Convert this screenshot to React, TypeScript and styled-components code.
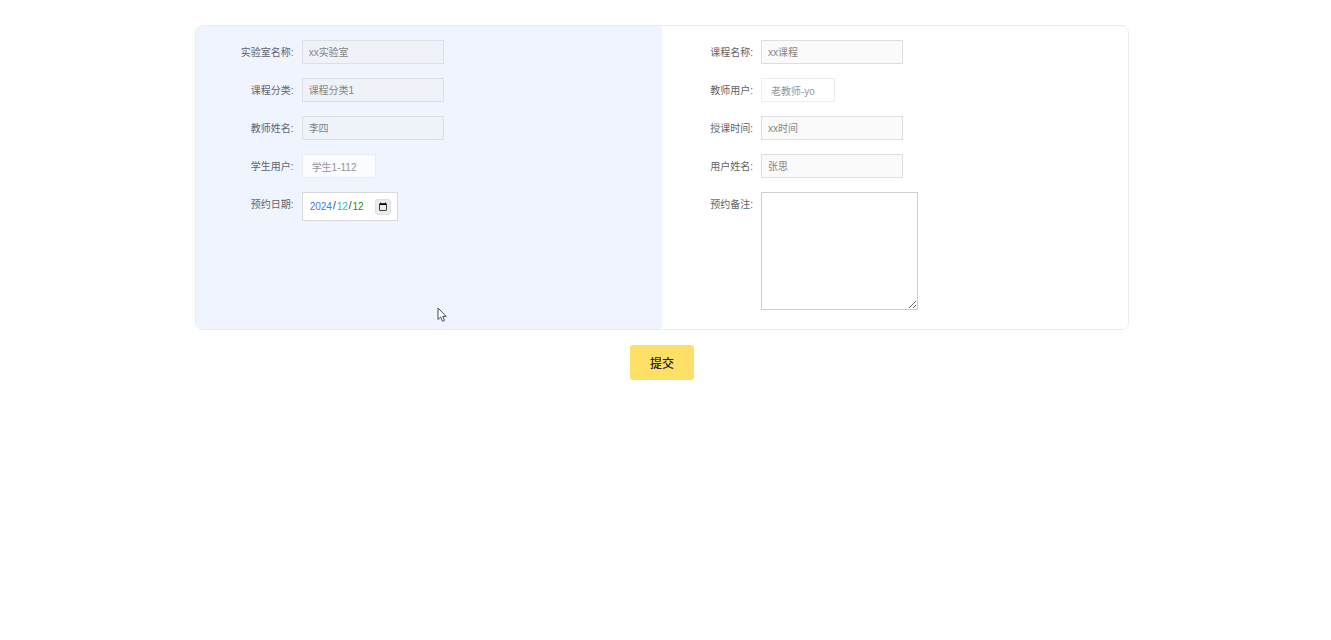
import React from "react";
import styled, { createGlobalStyle } from "styled-components";

const GlobalStyle = createGlobalStyle`
  * { box-sizing: border-box; }
  body {
    margin: 0;
    background: #fff;
    color: #5f636b;
    font-family: "Liberation Sans", "Noto Sans CJK SC", sans-serif;
    font-size: 10px;
  }
`;

const Page = styled.form`
  display: flex;
  flex-direction: column;
  align-items: center;
  gap: 15px;
  padding: 25px 7px 40px 0;
`;

const Card = styled.section`
  position: relative;
  display: grid;
  grid-template-columns: 1fr 1fr;
  width: 70.6%;
  border: 1px solid #e9ebef;
  border-radius: 8px;
  overflow: hidden;
`;

const Column = styled.div<{ $tinted?: boolean }>`
  display: flex;
  flex-direction: column;
  gap: 12px;
  padding: 14px 16px 19px ${(p) => (p.$tinted ? 7 : 0)}px;
  background: ${(p) => (p.$tinted ? "#f0f4fe" : "#fff")};
`;

const Row = styled.div`
  display: flex;
  align-items: flex-start;
  gap: 8px;
`;

const Label = styled.label`
  width: 91px;
  flex: none;
  line-height: 26px;
  text-align: right;
`;

const TextField = styled.input`
  width: 142px;
  height: 24px;
  padding: 0 6px 2px;
  border: 1px solid #dddfe2;
  border-radius: 0;
  background: rgba(239, 239, 239, 0.3);
  color: #858585;
  font: inherit;
`;

const PickField = styled.select`
  appearance: none;
  width: 74px;
  height: 24px;
  padding: 2px 9px 0;
  border: 1px solid #ececef;
  border-radius: 0;
  background: rgba(255, 255, 255, 0.7);
  color: #969696;
  font: inherit;
  opacity: 1;
`;

const DateField = styled.input`
  width: 96px;
  height: 29px;
  padding: 0 6px;
  border: 1px solid #d9d9d9;
  background: #fff;
  color: #333;
  font: inherit;

  &::-webkit-datetime-edit-fields-wrapper {
    display: flex;
    flex-direction: row-reverse;
    justify-content: flex-end;
  }
  &::-webkit-datetime-edit-year-field { color: #3a7df0; }
  &::-webkit-datetime-edit-day-field { color: #35b4e0; }
  &::-webkit-datetime-edit-month-field { color: #159415; }
  &::-webkit-calendar-picker-indicator {
    width: 10px;
    height: 10px;
    margin: 0;
    padding: 2px;
    border: 1px solid #e0e0e0;
    border-radius: 3px;
    background-color: #ececec;
    box-sizing: content-box;
  }
`;

const Notes = styled.textarea`
  display: block;
  width: 157px;
  height: 118px;
  padding: 6px;
  border: 1px solid #cfcfcf;
  border-radius: 0;
  background: #fff;
  font: inherit;
  resize: both;
`;

const SubmitButton = styled.button`
  padding: 0 20px;
  height: 35px;
  border: 0;
  border-radius: 3px;
  background: #ffe066;
  color: #222;
  font: 500 12px "Liberation Sans", "Noto Sans CJK SC", sans-serif;
`;

const Pointer = styled.svg`
  position: absolute;
  left: 241px;
  top: 281px;
  width: 10px;
  height: 16px;
  pointer-events: none;
`;

type FieldProps = { id: string; label: string; value: string };

const ReadOnlyRow = ({ id, label, value }: FieldProps) => (
  <Row>
    <Label htmlFor={id}>{label}:</Label>
    <TextField id={id} defaultValue={value} disabled />
  </Row>
);

const PickRow = ({ id, label, value }: FieldProps) => (
  <Row>
    <Label htmlFor={id}>{label}:</Label>
    <PickField id={id} defaultValue={value} disabled>
      <option>{value}</option>
    </PickField>
  </Row>
);

export default function App() {
  return (
    <>
      <GlobalStyle />
      <Page lang="zh-CN" onSubmit={(e) => e.preventDefault()}>
        <Card>
          <Column $tinted>
            <ReadOnlyRow id="lab" label="实验室名称" value="xx实验室" />
            <ReadOnlyRow id="category" label="课程分类" value="课程分类1" />
            <ReadOnlyRow id="teacher-name" label="教师姓名" value="李四" />
            <PickRow id="student" label="学生用户" value="学生1-112" />
            <Row>
              <Label htmlFor="date">预约日期:</Label>
              <DateField id="date" type="date" defaultValue="2024-12-12" />
            </Row>
          </Column>
          <Column>
            <ReadOnlyRow id="course" label="课程名称" value="xx课程" />
            <PickRow id="teacher" label="教师用户" value="老教师-yo" />
            <ReadOnlyRow id="time" label="授课时间" value="xx时间" />
            <ReadOnlyRow id="user-name" label="用户姓名" value="张思" />
            <Row>
              <Label htmlFor="notes">预约备注:</Label>
              <Notes id="notes" />
            </Row>
          </Column>
          <Pointer viewBox="0 0 10 16" aria-hidden="true">
            <path
              d="M1 1v11.5l2.6-2.4 1.9 4.2 2-.9-1.8-4H9.2z"
              fill="#fff"
              stroke="#4a4c55"
              strokeWidth="1"
              strokeLinejoin="round"
            />
          </Pointer>
        </Card>
        <SubmitButton type="submit">提交</SubmitButton>
      </Page>
    </>
  );
}
